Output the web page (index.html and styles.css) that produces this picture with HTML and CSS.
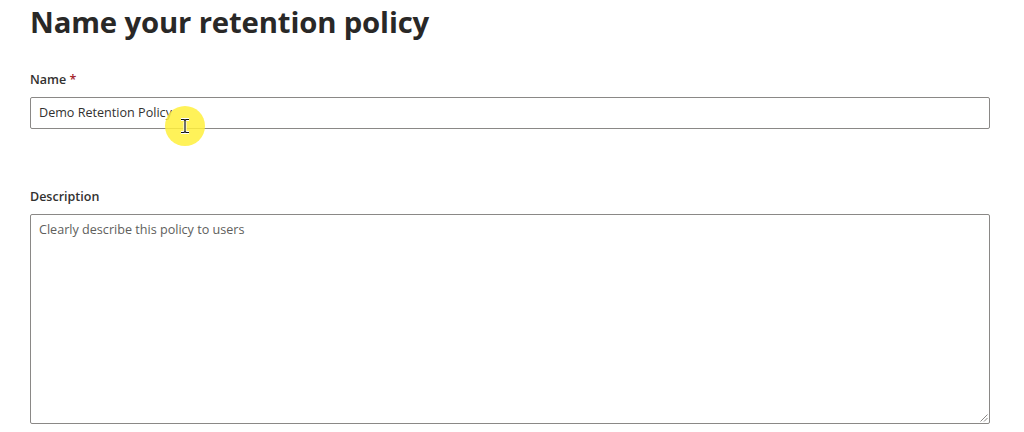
FILE: index.html
```html
<!DOCTYPE html>
<html>
<head>
<meta charset="utf-8">
<link rel="stylesheet" href="styles.css">
</head>
<body>
<main class="page">
  <h1 class="title">Name your retention policy</h1>
  <div class="field name-field">
    <label class="label">Name <span class="req">*</span></label>
    <div class="input-wrap">
      <div class="input">Demo Retention Policy</div>
      <div class="cursor-spot">
        <svg class="ibeam" width="10" height="16" viewBox="0 0 10 16">
          <path d="M1 1.5h3l1 1 1-1h3M5 2.5v11M1 14.5h3l1-1 1 1h3" fill="none" stroke="#fff" stroke-width="3"/>
          <path d="M1 1.5h3l1 1 1-1h3M5 2.5v11M1 14.5h3l1-1 1 1h3" fill="none" stroke="#111" stroke-width="1.2"/>
        </svg>
      </div>
    </div>
  </div>
  <div class="field desc-field">
    <label class="label">Description</label>
    <div class="textarea">
      <span class="placeholder">Clearly describe this policy to users</span>
      <svg class="grip" width="9" height="9" viewBox="0 0 9 9">
        <path d="M8.5 1.5L1.5 8.5M8.5 5L5 8.5" stroke="#8a8886" stroke-width="1" fill="none"/>
      </svg>
    </div>
  </div>
</main>
</body>
</html>
```
FILE: styles.css
```css
html, body {
  margin: 0;
  padding: 0;
  background: #ffffff;
}
body {
  font-family: "Open Sans", "Noto Sans", sans-serif;
  color: #323130;
  width: 1024px;
  height: 432px;
  overflow: hidden;
}
.page {
  padding: 0 34px 0 30px;
  display: flex;
  flex-direction: column;
}
.title {
  margin: 0;
  padding-top: 2px;
  font-size: 29.3px;
  font-weight: 700;
  line-height: 40px;
  color: #292827;
  letter-spacing: -0.15px;
}
.field {
  display: flex;
  flex-direction: column;
}
.name-field {
  margin-top: 30px;
}
.desc-field {
  margin-top: 60px;
}
.label {
  font-size: 12.5px;
  font-weight: 600;
  line-height: 16px;
  padding-bottom: 9px;
  color: #323130;
}
.req {
  color: #a4262c;
}
.input-wrap {
  position: relative;
}
.input {
  height: 32px;
  box-sizing: border-box;
  border: 1px solid #8a8886;
  border-radius: 2px;
  padding: 0 8px;
  font-size: 12.6px;
  line-height: 30px;
  color: #323130;
}
.cursor-spot {
  position: absolute;
  left: 135px;
  top: 9px;
  width: 40px;
  height: 40px;
  border-radius: 50%;
  background: rgba(255, 240, 60, 0.85);
  display: flex;
  align-items: center;
  justify-content: center;
}
.textarea {
  position: relative;
  box-sizing: border-box;
  height: 210px;
  border: 1px solid #8a8886;
  border-radius: 2px;
  padding: 6px 8px;
  font-size: 12.6px;
  line-height: 18px;
}
.placeholder {
  color: #605e5c;
}
.grip {
  position: absolute;
  right: 1px;
  bottom: 1px;
}
```
